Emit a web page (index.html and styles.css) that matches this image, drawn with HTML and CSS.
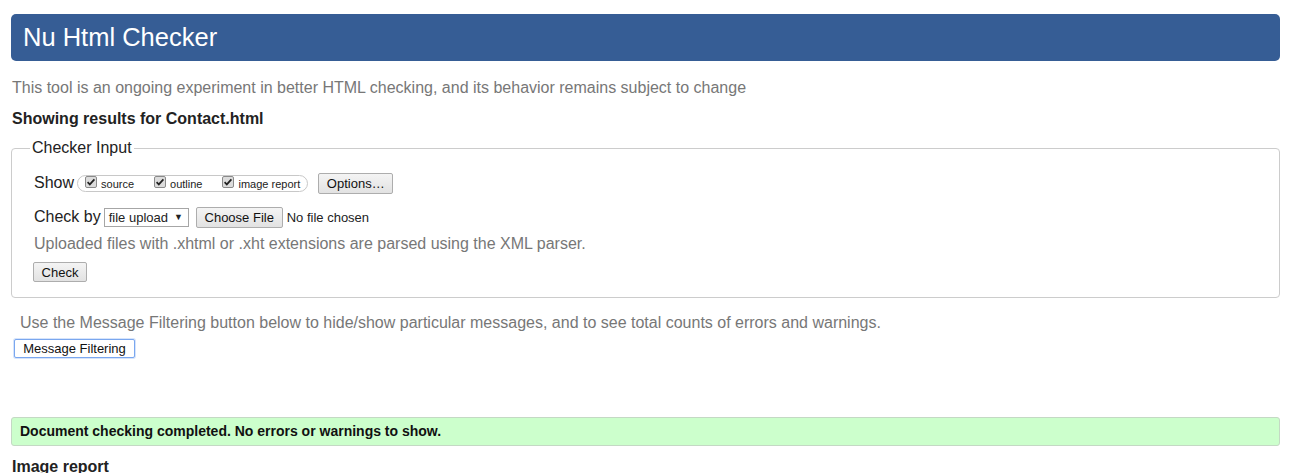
FILE: index.html
```html
<!DOCTYPE html>
<html lang="en">
<head>
<meta charset="utf-8">
<title>Nu Html Checker</title>
<link rel="stylesheet" href="styles.css">
</head>
<body>
<div class="page">
  <h1 class="header">Nu Html Checker</h1>
  <p class="intro">This tool is an ongoing experiment in better HTML checking, and its behavior remains subject to change</p>
  <p class="results">Showing results for Contact.html</p>

  <fieldset class="checker">
    <legend class="legend">Checker Input</legend>
    <div class="row row-show">
      <span class="label">Show</span>
      <span class="cbgroup">
        <span class="cbitem"><svg class="cb" width="12" height="12" viewBox="0 0 12 12"><rect x="0.5" y="0.5" width="11" height="11" rx="1.5" fill="#dcdcdc" stroke="#8a8a8a"/><path d="M2.6 6.2 L4.8 8.4 L9.4 3.4" fill="none" stroke="#222" stroke-width="1.7"/></svg><span class="cbtext">source</span></span>
        <span class="cbitem"><svg class="cb" width="12" height="12" viewBox="0 0 12 12"><rect x="0.5" y="0.5" width="11" height="11" rx="1.5" fill="#dcdcdc" stroke="#8a8a8a"/><path d="M2.6 6.2 L4.8 8.4 L9.4 3.4" fill="none" stroke="#222" stroke-width="1.7"/></svg><span class="cbtext">outline</span></span>
        <span class="cbitem"><svg class="cb" width="12" height="12" viewBox="0 0 12 12"><rect x="0.5" y="0.5" width="11" height="11" rx="1.5" fill="#dcdcdc" stroke="#8a8a8a"/><path d="M2.6 6.2 L4.8 8.4 L9.4 3.4" fill="none" stroke="#222" stroke-width="1.7"/></svg><span class="cbtext">image report</span></span>
      </span>
      <span class="btn btn-options">Options…</span>
    </div>
    <div class="row row-checkby">
      <span class="label">Check by</span>
      <span class="select">file upload <span class="arrow">▼</span></span>
      <span class="btn btn-file">Choose File</span>
      <span class="nofile">No file chosen</span>
    </div>
    <p class="hint">Uploaded files with .xhtml or .xht extensions are parsed using the XML parser.</p>
    <span class="btn btn-check">Check</span>
  </fieldset>

  <p class="filter-text">Use the Message Filtering button below to hide/show particular messages, and to see total counts of errors and warnings.</p>
  <span class="btn btn-filter">Message Filtering</span>

  <div class="success">Document checking completed. No errors or warnings to show.</div>
  <h2 class="report">Image report</h2>
</div>
</body>
</html>
```
FILE: styles.css
```css
html, body {
  margin: 0;
  padding: 0;
  background: #fff;
}
body {
  font-family: "Liberation Sans", Arial, sans-serif;
  color: #222;
  overflow: hidden;
}
.page {
  padding: 14px 23px 0 11px;
}
.header {
  margin: 0;
  height: 47px;
  line-height: 47px;
  background: #365d95;
  color: #fff;
  border-radius: 5px;
  font-size: 25.5px;
  font-weight: normal;
  padding-left: 12px;
}
.intro {
  margin: 17px 0 0 1px;
  font-size: 16px;
  line-height: 20px;
  color: #777;
}
.results {
  margin: 11px 0 0 1px;
  font-size: 16px;
  line-height: 20px;
  font-weight: bold;
}
.checker {
  margin: 9px 0 0 0;
  border: 1px solid #ccc;
  border-radius: 4px;
  padding: 2px 20px 15px 22px;
  min-width: 0;
}
.legend {
  font-size: 16px;
  line-height: 20px;
  padding: 0 2px;
  margin-left: -4px;
  color: #222;
}
.row {
  display: flex;
  align-items: center;
  height: 22px;
  white-space: nowrap;
}
.row-show {
  margin-top: 12px;
}
.row-checkby {
  margin-top: 12px;
}
.label {
  font-size: 16px;
  color: #222;
}
.cbgroup {
  display: flex;
  align-items: center;
  gap: 20px;
  height: 17px;
  margin-left: 3px;
  padding: 0 7px 0 7px;
  border: 1px solid #c8c8c8;
  border-radius: 9px;
  box-sizing: border-box;
  white-space: nowrap;
}
.cbitem {
  display: flex;
  align-items: center;
  white-space: nowrap;
}
.cb {
  display: block;
  flex: none;
  margin-top: -2px;
}
.cbtext {
  font-size: 11px;
  margin-left: 4px;
  color: #222;
  margin-top: 1px;
}
.btn {
  display: inline-flex;
  align-items: center;
  justify-content: center;
  box-sizing: border-box;
  font-size: 13px;
  color: #111;
  border: 1px solid #adadad;
  border-radius: 2px;
  background: linear-gradient(#f4f4f4, #e2e2e2);
  white-space: nowrap;
}
.btn-options {
  width: 75px;
  height: 21px;
  margin-left: 10px;
}
.select {
  display: inline-flex;
  align-items: center;
  box-sizing: border-box;
  width: 85px;
  height: 19px;
  margin-left: 3px;
  padding-left: 4px;
  font-size: 13px;
  border: 1px solid #a6a6a6;
  background: #fff;
}
.arrow {
  font-size: 9px;
  margin-left: 6px;
}
.btn-file {
  width: 87px;
  height: 21px;
  margin-left: 7px;
}
.nofile {
  font-size: 13px;
  margin-left: 4px;
  color: #222;
}
.hint {
  margin: 6px 0 0 0;
  font-size: 16px;
  line-height: 20px;
  color: #777;
}
.btn-check {
  width: 54px;
  height: 20px;
  margin-top: 8px;
  margin-left: -1px;
}
.filter-text {
  margin: 15px 0 0 9px;
  font-size: 16px;
  line-height: 20px;
  color: #777;
}
.btn-filter {
  margin: 6px 0 0 3px;
  width: 121px;
  height: 19px;
  border: 1px solid #7aa7ef;
  box-shadow: 0 0 0 1px #d6e4fb;
  border-radius: 2px;
  background: #fff;
}
.success {
  margin-top: 59px;
  height: 29px;
  box-sizing: border-box;
  line-height: 27px;
  background: #ccffcc;
  border: 1px solid #c4d9c4;
  border-radius: 3px;
  padding-left: 8px;
  font-size: 14px;
  font-weight: bold;
  color: #111;
}
.report {
  margin: 11px 0 0 1px;
  font-size: 16px;
  line-height: 20px;
  font-weight: bold;
}
```
